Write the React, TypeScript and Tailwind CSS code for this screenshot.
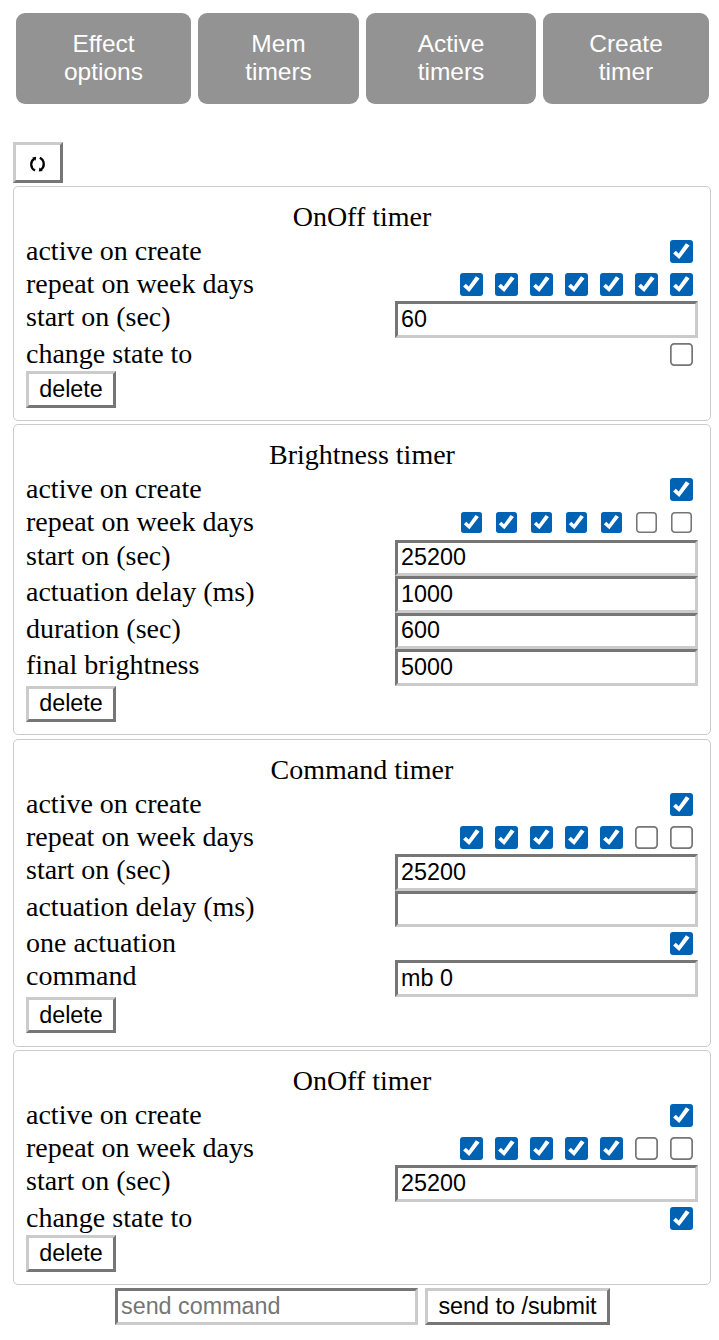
import React from "react";

const serif = "font-['Liberation_Serif',serif] text-[28px] text-black";
const sans = "font-['Liberation_Sans',sans-serif] text-[23.33px] leading-[27px] text-black";
const inset =
  "block w-[303px] shrink-0 rounded-none border-[3px] border-t-[#767676] border-l-[#767676] border-r-[#cbcbcb] border-b-[#cbcbcb] bg-white pl-[3px] outline-none placeholder:text-[#757575]";
const outset =
  "block shrink-0 rounded-none border-[3px] border-t-[#cbcbcb] border-l-[#cbcbcb] border-r-[#767676] border-b-[#767676] bg-white text-center";

type Row = {
  label: string;
  h: string;
  value?: string;
  checks?: boolean[];
  small?: boolean;
};
type Card = { title: string; h: string; gap: string; rows: Row[]; buttonH: string };

const all = [true, true, true, true, true, true, true];
const work = [true, true, true, true, true, false, false];

const cards: Card[] = [
  {
    title: "OnOff timer",
    h: "h-[235px]",
    gap: "mt-[3px]",
    buttonH: "h-[37px]",
    rows: [
      { label: "active on create", h: "h-[33px]", checks: [true] },
      { label: "repeat on week days", h: "h-[33px]", checks: all },
      { label: "start on (sec)", h: "h-[37px]", value: "60" },
      { label: "change state to", h: "h-[33px]", checks: [false] },
    ],
  },
  {
    title: "Brightness timer",
    h: "h-[311px]",
    gap: "mt-[3px]",
    buttonH: "h-[36px] pb-[2px]",
    rows: [
      { label: "active on create", h: "h-[33px]", checks: [true] },
      { label: "repeat on week days", h: "h-[34px]", checks: work, small: true },
      { label: "start on (sec)", h: "h-[36px]", value: "25200" },
      { label: "actuation delay (ms)", h: "h-[37px]", value: "1000" },
      { label: "duration (sec)", h: "h-[36px]", value: "600" },
      { label: "final brightness", h: "h-[37px]", value: "5000" },
    ],
  },
  {
    title: "Command timer",
    h: "h-[308px]",
    gap: "mt-1",
    buttonH: "h-[36px]",
    rows: [
      { label: "active on create", h: "h-[33px]", checks: [true] },
      { label: "repeat on week days", h: "h-[33px]", checks: work },
      { label: "start on (sec)", h: "h-[37px]", value: "25200" },
      { label: "actuation delay (ms)", h: "h-[36px]", value: "" },
      { label: "one actuation", h: "h-[33px]", checks: [true] },
      { label: "command", h: "h-[37px]", value: "mb 0" },
    ],
  },
  {
    title: "OnOff timer",
    h: "h-[235px]",
    gap: "mt-[3px]",
    buttonH: "h-[37px]",
    rows: [
      { label: "active on create", h: "h-[33px]", checks: [true] },
      { label: "repeat on week days", h: "h-[33px]", checks: work },
      { label: "start on (sec)", h: "h-[37px]", value: "25200" },
      { label: "change state to", h: "h-[33px]", checks: [true] },
    ],
  },
];

function Check({ on, small }: { on: boolean; small?: boolean }) {
  return (
    <svg
      role="checkbox"
      aria-checked={on}
      viewBox="0 0 23 23"
      className={small ? "m-px size-[21px]" : "size-[23px]"}
    >
      {on ? (
        <>
          <rect width="23" height="23" rx="3" fill="#0062b3" />
          <path d="M3.1 13.5 5.8 10.8 8.7 13.4 15.9 3.3 19.6 5.5 9.2 19Z" fill="#fff" />
        </>
      ) : (
        <rect x="0.85" y="0.85" width="21.3" height="21.3" rx="3.3" fill="#fff" stroke="#767676" strokeWidth="1.7" />
      )}
    </svg>
  );
}

function TimerCard({ card }: { card: Card }) {
  return (
    <section className={`${card.gap} ${card.h} ${serif} rounded-[5px] border border-[#cbcbcb] px-3 pt-[14px]`}>
      <h2 className="h-[34px] text-center leading-[31px]">{card.title}</h2>
      {card.rows.map((row) => (
        <div key={row.label} className={`flex justify-between ${row.h}`}>
          <span className="leading-[31px]">{row.label}</span>
          {row.checks ? (
            <div className="flex gap-3 pt-[5px] pr-[5px]">
              {row.checks.map((on, i) => (
                <Check key={i} on={on} small={row.small} />
              ))}
            </div>
          ) : (
            <input
              className={`${inset} ${sans} h-full ${row.h === "h-[36px]" ? "pb-[2px]" : ""}`}
              defaultValue={row.value}
            />
          )}
        </div>
      ))}
      <button className={`${outset} ${sans} ${card.buttonH} w-[90px]`}>delete</button>
    </section>
  );
}

const tabs = [
  { a: "Effect", b: "options", w: "w-[175px]" },
  { a: "Mem", b: "timers", w: "w-[161px]" },
  { a: "Active", b: "timers", w: "w-[170px]" },
  { a: "Create", b: "timer", w: "w-[166px]" },
];

export default function App() {
  return (
    <main className="h-[1340px] w-[719px] overflow-hidden bg-white pt-[13px] pl-[13px] pr-2">
      <nav className="flex gap-[7px] pl-[3px]">
        {tabs.map((t) => (
          <button
            key={t.a}
            className={`${t.w} h-[91px] rounded-[9px] bg-[#939393] pb-px font-['Liberation_Sans',sans-serif] text-[24.5px] leading-[28px] text-white`}
          >
            {t.a}
            <br />
            {t.b}
          </button>
        ))}
      </nav>
      <button
        aria-label="refresh"
        className={`${outset} mt-[38px] h-[41px] w-[50px] pt-[2px]`}
      >
        <svg viewBox="0 0 16 16" className="mx-auto size-4">
          <path d="M5 14.6C.1 12 .1 5.4 4.2 2.8" fill="none" stroke="#000" strokeWidth="2.3" />
          <path d="M2.2 1.4 6.2.8 5.6 4.8Z" />
          <path d="M9.8 1.8C14.9 4.4 14.9 11 10.8 13.6" fill="none" stroke="#000" strokeWidth="2.3" />
          <path d="M12.8 15 8.8 15.6 9.4 11.6Z" />
        </svg>
      </button>
      {cards.map((card, i) => (
        <TimerCard key={i} card={card} />
      ))}
      <footer className="mt-[3px] flex gap-[7px] pl-[102px]">
        <input className={`${inset} ${sans} h-[37px]`} placeholder="send command" />
        <button className={`${outset} ${sans} h-[37px] w-[185px]`}>send to /submit</button>
      </footer>
    </main>
  );
}
